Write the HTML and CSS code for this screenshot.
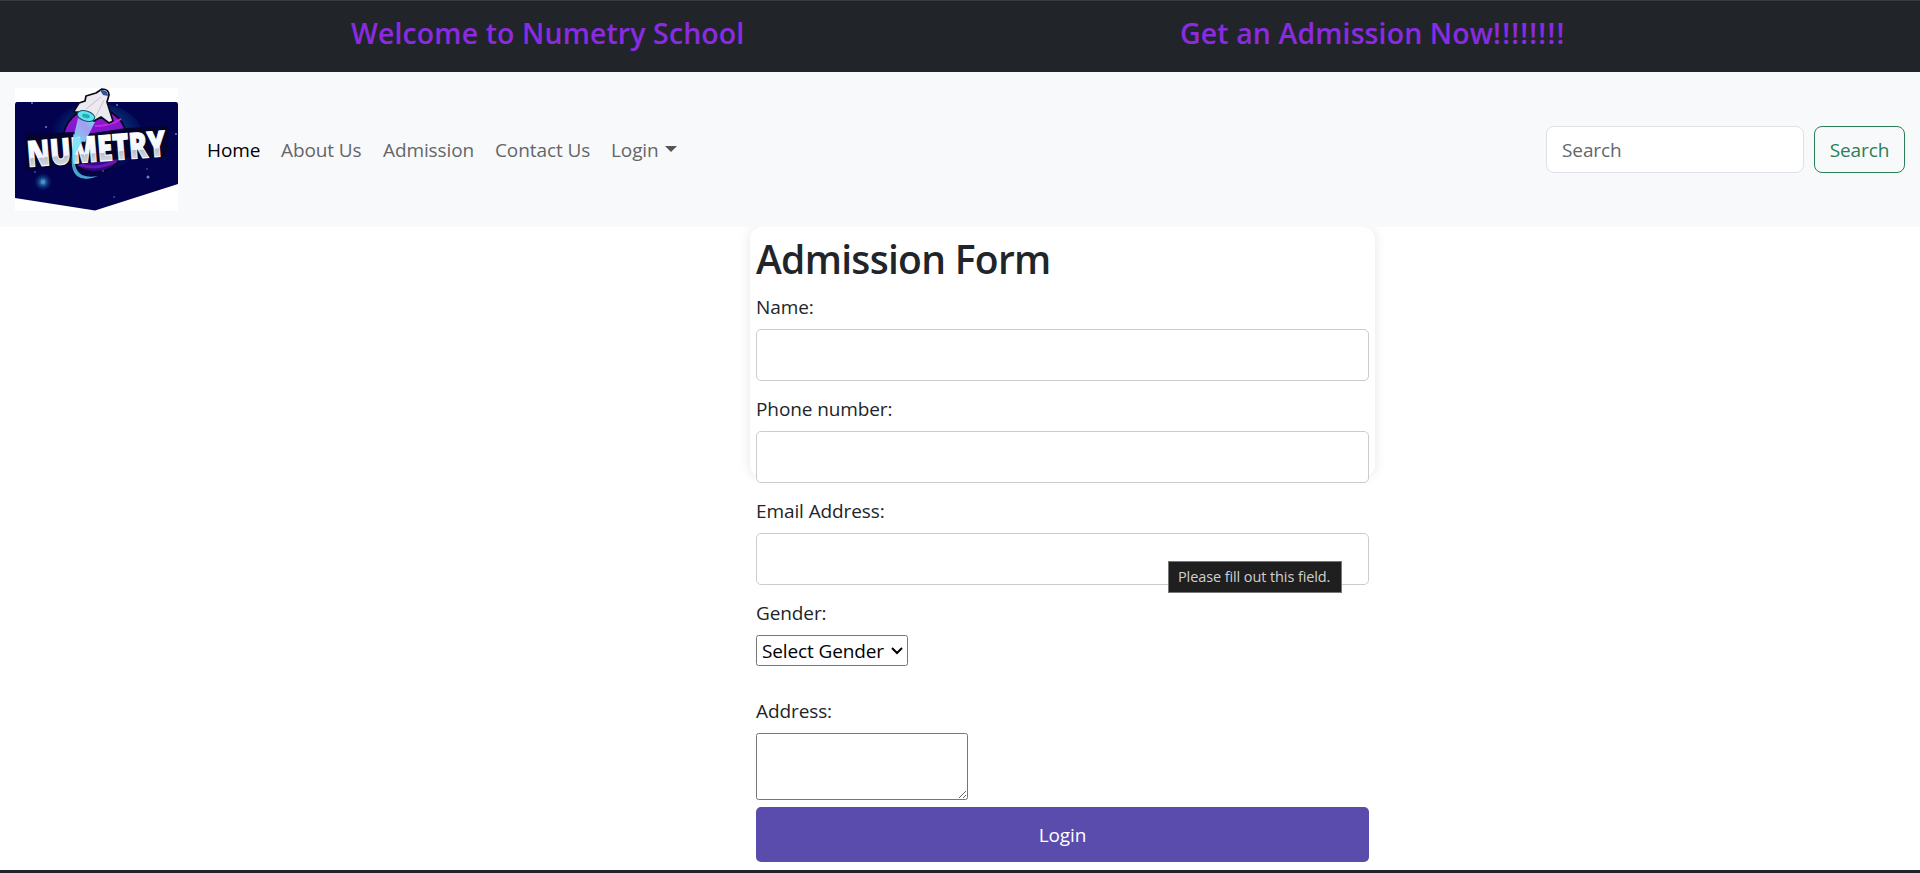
FILE: index.html
```html
<!DOCTYPE html>
<html lang="en">
<head>
<meta charset="utf-8">
<title>Numetry School</title>
<link rel="stylesheet" href="styles.css">
</head>
<body>
<header class="banner">
  <h4 class="banner-text"><span class="welcome">Welcome to Numetry School</span></h4>
  <h4 class="banner-text"><span class="cta">Get an Admission Now<span class="marks">!!!!!!!!</span></span></h4>
</header>
<nav class="navbar">
  <svg class="logo" viewBox="0 0 163 123" role="img" aria-label="Numetry">
    <defs>
      <radialGradient id="sky" cx=".53" cy=".42" r=".5"><stop offset="0" stop-color="#0864a8"/><stop offset=".5" stop-color="#05327a"/><stop offset="1" stop-color="#03024f"/></radialGradient>
      <radialGradient id="spark"><stop offset="0" stop-color="#6fb8e8"/><stop offset=".3" stop-color="#15609f"/><stop offset="1" stop-color="#03024f" stop-opacity="0"/></radialGradient>
      <linearGradient id="planet" x2="0" y2="1"><stop offset="0" stop-color="#a614d2"/><stop offset=".45" stop-color="#7418cc"/><stop offset="1" stop-color="#280580"/></linearGradient>
      <linearGradient id="letters" x2="0" y2="1"><stop offset=".25" stop-color="#fff"/><stop offset=".6" stop-color="#eef4fb"/><stop offset=".61" stop-color="#b9bfca"/><stop offset="1" stop-color="#f4f6fa"/></linearGradient>
      <linearGradient id="beam" x1="1" x2="0" y2="1"><stop offset="0" stop-color="#62e4f4"/><stop offset=".4" stop-color="#a99af2"/><stop offset="1" stop-color="#6bdcf3"/></linearGradient>
    </defs>
    <rect width="163" height="123" fill="#fff"/>
    <path d="M2 14H161Q163 14 163 17V96L80 122.500L0 110V17Q0 14 2 14Z" fill="#03024f"/>
    <ellipse cx="81" cy="52" rx="48" ry="37" fill="url(#sky)"/>
    <circle cx="28" cy="94" r="10" fill="url(#spark)"/>
    <circle cx="80" cy="52" r="32" fill="url(#planet)" stroke="#080426" stroke-width="2"/>
    <path d="M80 38Q95 38 106 31" fill="none" stroke="#c52be0" stroke-width="2"/>
    <path d="M63 76Q82 83 101 73" fill="none" stroke="#6a18b4" stroke-width="3"/>
    <path d="M10 46L57 44L72 46L111 40L154 38L151 69L111 70L60 77L10 82Z" fill="#05042e"/>
    <path d="M63 30L80 34L70 54L58 52Z" fill="url(#beam)"/>
    <g transform="translate(13 79) rotate(-4.500)">
      <text class="logo-text" x="0" y="0" textLength="139" lengthAdjust="spacingAndGlyphs" fill="url(#letters)">NUMETRY</text>
    </g>
    <path d="M58 46L68 52L61 64Q57 81 67 87Q74 90 83 88Q70 94 62 88Q54 81 58 60Z" fill="#5cdcf3" opacity=".75"/>
    <path d="M59 23L64 15L70 13L71 8L81 5L87 1Q94 1 94 7L92 14L98 33L94 35L86 29L79 33L70 24L59 24Z" fill="#eceaf0" stroke="#090a19" stroke-width="1.700" stroke-linejoin="round"/>
    <path d="M85 2Q93 1 93 8L88 7Z" fill="#345198"/>
    <path d="M86 9L71 21M89 12L80 30" stroke="#c4c1cc" fill="none"/>
    <ellipse cx="71" cy="28" rx="9" ry="5" transform="rotate(16 71 28)" fill="#61e4ea" stroke="#15516e"/>
    <ellipse cx="71" cy="28" rx="4" ry="2" transform="rotate(16 71 28)" fill="#21acc1"/>
    <g fill="#6884bd"><circle cx="28" cy="94" r="2"/><circle cx="133" cy="89" r="1.500"/><circle cx="31" cy="39" r="1"/><circle cx="17" cy="15" r="1"/><circle cx="102" cy="17" r="1"/><circle cx="161" cy="46" r="1"/><circle cx="99" cy="109" r=".8"/><circle cx="20" cy="84" r=".8"/><circle cx="88" cy="83" r=".8"/><circle cx="132" cy="81" r=".7"/></g>
  </svg>
  <div class="menu">
    <a class="item home">Home</a><a class="item about">About Us</a><a class="item admission">Admission</a><a class="item contact">Contact Us</a><a class="item login">Login<i class="caret"></i></a>
  </div>
  <form class="search">
    <input class="search-input" placeholder="Search">
    <button class="search-button" type="button">Search</button>
  </form>
</nav>
<main class="card">
  <h1 class="title">Admission Form</h1>
  <form class="form">
    <label class="label" for="name">Name:</label>
    <input class="field" id="name">
    <label class="label" for="phone">Phone number:</label>
    <input class="field" id="phone">
    <label class="label" for="email">Email Address:</label>
    <div class="field-wrap"><input class="field" id="email"><span class="tooltip">Please fill out this field.</span></div>
    <label class="label" for="gender">Gender:</label>
    <select class="gender" id="gender"><option>Select Gender</option></select>
    <label class="label" for="address">Address:</label>
    <textarea class="address" id="address"></textarea>
    <button class="submit" type="button">Login</button>
  </form>
</main>
<footer class="bottom"></footer>
</body>
</html>
```
FILE: styles.css
```css
* { box-sizing: border-box; }
body { margin: 0; height: 873px; overflow: hidden; display: flex; flex-direction: column; background: #fff; color: #212529; font: 19px/30px "Open Sans", "Noto Sans", sans-serif; letter-spacing: -.1px; }
input, button, select, textarea { font: inherit; letter-spacing: inherit; margin: 0; }
.banner { height: 72px; flex: none; display: grid; grid-template-columns: 1180px 1fr; background: #212529; border-top: 1px solid #373c40; color: #8a2be2; }
.banner-text { margin: 0; padding-top: 14px; font-size: 28.500px; line-height: 36px; font-weight: 600; white-space: nowrap; letter-spacing: .1px; }
.welcome { margin-left: 351px; }
.marks { letter-spacing: 1.200px; }
.navbar { height: 155px; flex: none; display: flex; align-items: center; padding: 0 15px; background: #f8f9fb; }
.logo { width: 163px; height: 123px; flex: none; overflow: visible; }
.logo-text { font: 800 36px "Open Sans", sans-serif; letter-spacing: 0; stroke: #fff; stroke-width: 1px; }
.menu { display: flex; margin-left: 29px; padding-top: 1px; color: #646669; }
.item { white-space: nowrap; }
.home { width: 74px; color: #000; }
.about { width: 102px; }
.admission { width: 112px; }
.contact { width: 116px; }
.login { display: flex; align-items: center; gap: 6px; }
.caret { border: 6px solid transparent; border-top-color: #555; border-bottom: 0; margin-top: -3px; }
.search { display: flex; gap: 10px; margin-left: auto; }
.search-input { width: 258px; height: 47px; padding: 1px 15px 0; border: 1px solid #dee2e6; border-radius: 8px; background: #fff; }
.search-input::placeholder { color: #62676c; }
.search-button { width: 91px; height: 47px; padding: 1px 0 0; border: 1px solid #287f58; border-radius: 8px; background: transparent; color: #287f58; }
.card { width: 625px; height: 250px; flex: none; margin-left: 750px; padding: 8px 6px 0; border-radius: 12px; box-shadow: 0 0 12px rgba(0,0,0,.1); clip-path: inset(0 -20px -420px -20px); }
.title { margin: 0; font-size: 39px; line-height: 47px; font-weight: 600; letter-spacing: -.7px; }
.form { display: flex; flex-direction: column; align-items: flex-start; }
.label { height: 47px; padding-top: 10px; }
.field { display: block; width: 613px; height: 52px; margin-bottom: 3px; border: 1px solid #ccc; border-radius: 5px; background: #fff; }
.field-wrap { position: relative; }
.tooltip { position: absolute; left: 412px; top: 28px; width: 174px; height: 32px; padding-left: 9px; border: 1px solid #777; background: #1f1f1f; color: #d0d0d0; font-size: 14.500px; line-height: 29px; letter-spacing: -.1px; white-space: nowrap; }
.gender { zoom: 1.25; width: 121.600px; height: 24.800px; margin: 0 0 16px; padding: 1px 0 0; border: 1px solid #767676; border-radius: 2px; background: #fff; color: #000; font-size: 15.200px; }
.address { zoom: 1.25; width: 169.600px; height: 53.600px; margin: 0 0 5.600px; border: 1px solid #767676; border-radius: 2px; }
.submit { width: 613px; height: 55px; padding: 1px 0 0; border: 0; border-radius: 5px; background: #594cac; color: #fff; }
.bottom { height: 3px; flex: none; margin-top: auto; background: #252126; }
```
